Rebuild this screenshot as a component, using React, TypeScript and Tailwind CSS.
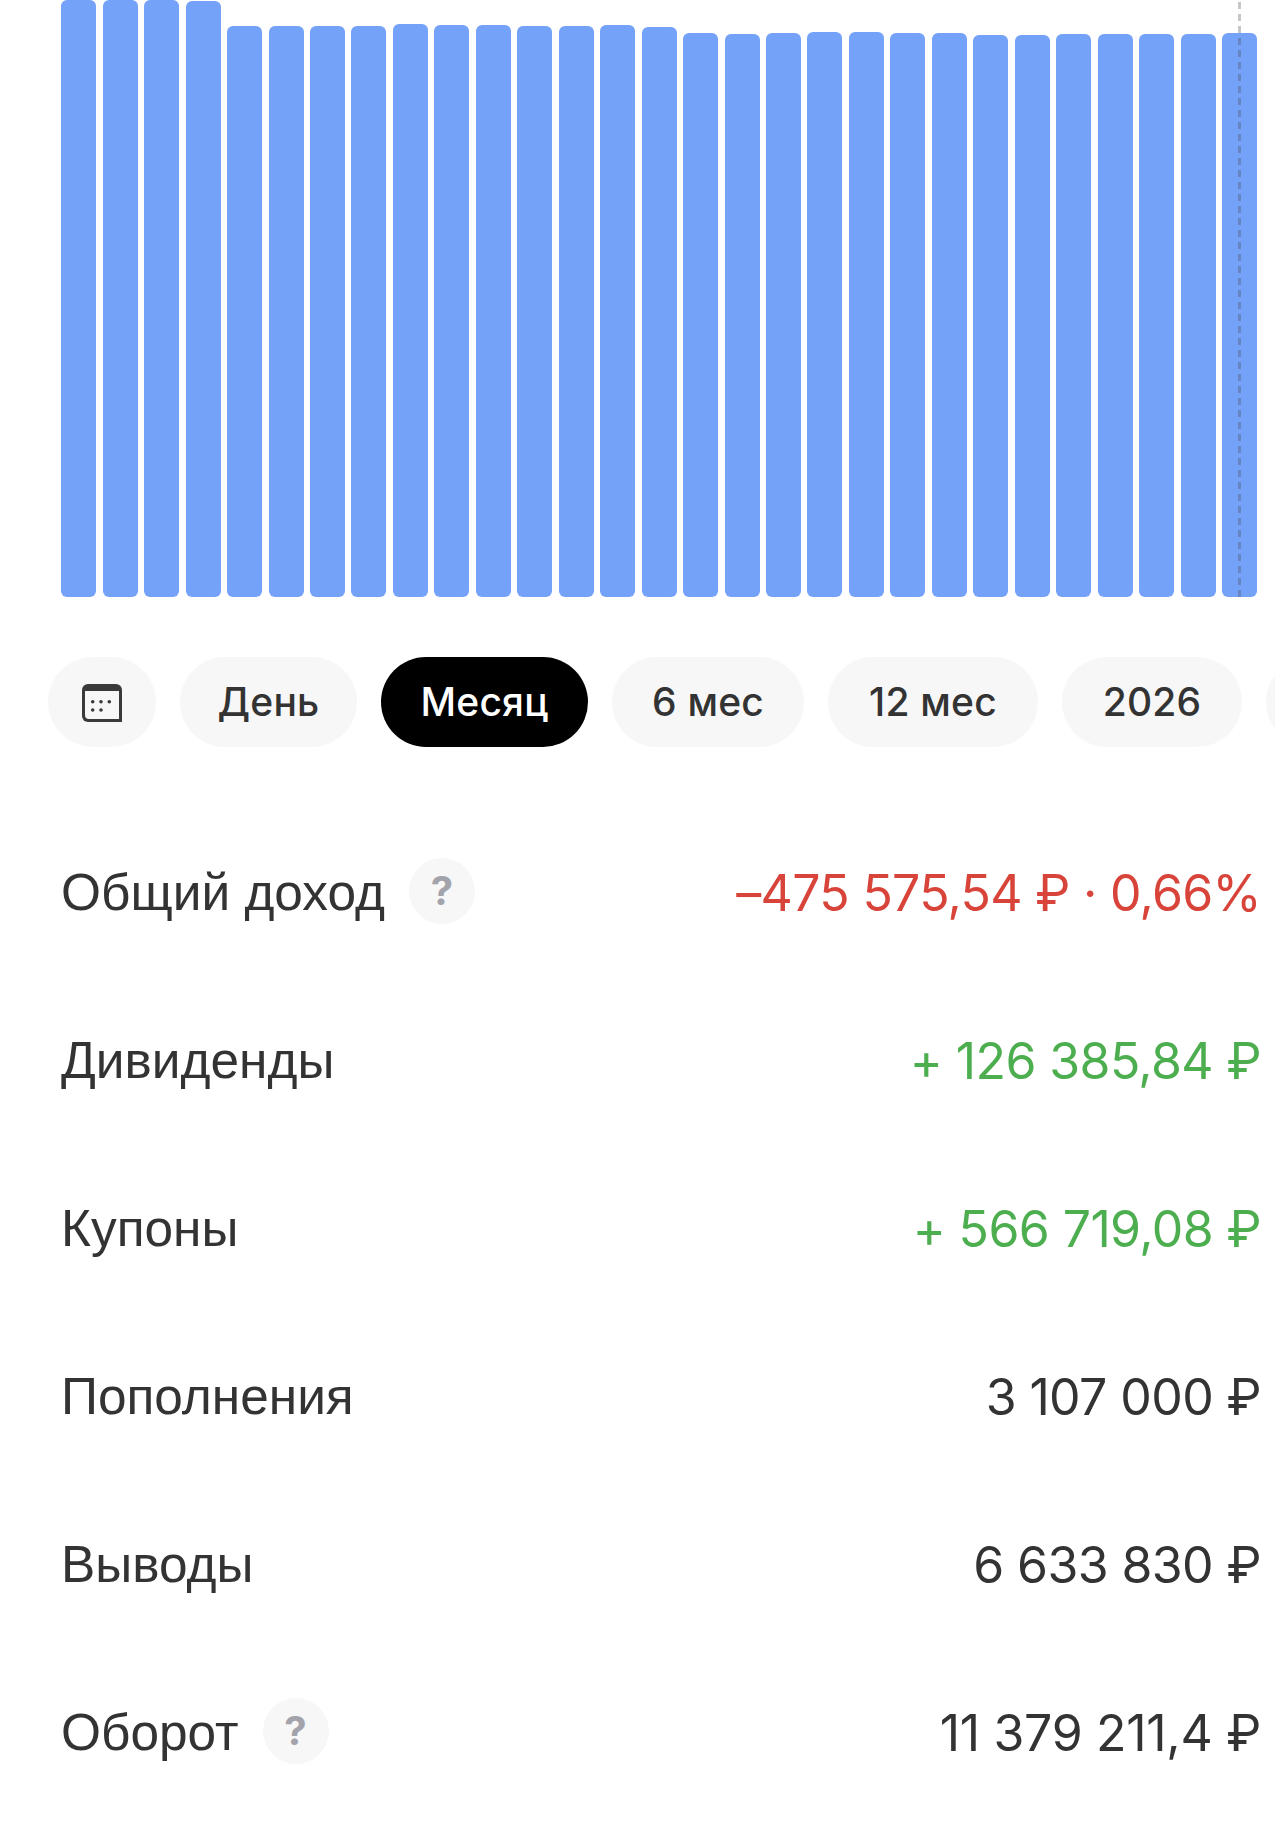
const tops = [0,0,0,1,26,26,26,26,24,25,25,26,26,25,27,33,34,33,32,32,33,33,35,35,34,34,34,34,33];

const rows = [
  { label: "Общий доход", help: true, value: "–475 575,54 ₽ · 0,66%", color: "text-[#d8443a]", track: "tracking-[-0.7px]" },
  { label: "Дивиденды", value: "+ 126 385,84 ₽", color: "text-[#4cae4f]", track: "tracking-[-0.6px]" },
  { label: "Купоны", value: "+ 566 719,08 ₽", color: "text-[#4cae4f]", track: "tracking-[-0.6px]" },
  { label: "Пополнения", value: "3 107 000 ₽", color: "text-[#333333]", track: "tracking-[-0.6px]" },
  { label: "Выводы", value: "6 633 830 ₽", color: "text-[#333333]", track: "tracking-[-0.6px]" },
  { label: "Оборот", help: true, value: "11 379 211,4 ₽", color: "text-[#333333]", track: "tracking-[-0.3px]" },
];

const pills = [
  { t: "День", w: "w-[177px]" },
  { t: "Месяц", w: "w-[207px]", active: true },
  { t: "6 мес", w: "w-[192px]" },
  { t: "12 мес", w: "w-[210px]" },
  { t: "2026", w: "w-[180px]" },
];

function CalendarIcon() {
  return (
    <svg className="mt-[1px]" width="40" height="38" viewBox="0 0 40 38" fill="none">
      <path d="M0 6a6 6 0 0 1 6-6h28a6 6 0 0 1 6 6v32H6a6 6 0 0 1-6-6V6z" fill="#3a3a3c" />
      <path d="M3 7h34v28H7a4 4 0 0 1-4-4V7z" fill="#f7f7f7" />
      <circle cx="10.7" cy="17.7" r="1.8" fill="#3a3a3c" />
      <circle cx="19" cy="17.7" r="1.8" fill="#3a3a3c" />
      <circle cx="27.3" cy="17.7" r="1.8" fill="#3a3a3c" />
      <circle cx="10.7" cy="26" r="1.8" fill="#3a3a3c" />
      <circle cx="19" cy="26" r="1.8" fill="#3a3a3c" />
    </svg>
  );
}

function Help() {
  return (
    <span className="mb-[3px] flex h-[66px] w-[66px] items-center justify-center rounded-full bg-[#f7f7f7] font-['Inter',sans-serif] text-[40px] font-bold text-[#a3a3ab]">
      ?
    </span>
  );
}

export default function App() {
  return (
    <div className="h-[1844px] w-[1275px] overflow-hidden bg-white">
      <div className="relative flex h-[597px] gap-[6.45px] pl-[61.3px] pr-[18px]">
        {tops.map((t, i) => (
          <div key={i} className="flex-1" style={{ paddingTop: t }}>
            <div className="h-full rounded-[6px] bg-[#74a2f9]" />
          </div>
        ))}
        <svg className="absolute left-[1238px] top-0" width="3" height="597">
          <line x1="1.5" y1="2" x2="1.5" y2="597" stroke="#464646" strokeOpacity="0.3" strokeWidth="3" strokeDasharray="7 5" />
        </svg>
      </div>

      <div className="mt-[60px] flex gap-[24px] pl-[48px]">
        <div className="flex h-[90px] w-[108px] shrink-0 items-center justify-center rounded-full bg-[#f7f7f7]">
          <CalendarIcon />
        </div>
        {pills.map((p) => (
          <div
            key={p.t}
            className={`flex h-[90px] shrink-0 items-center justify-center rounded-full font-['Inter',sans-serif] text-[39px] tracking-[0.2px] font-[550] ${p.w} ${
              p.active ? "bg-black text-white" : "bg-[#f7f7f7] text-[#333333]"
            }`}
          >
            {p.t}
          </div>
        ))}
        <div className="h-[90px] w-[108px] shrink-0 rounded-full bg-[#f7f7f7]" />
      </div>

      <div className="mt-[62px] flex flex-col pl-[61px] pr-[14px]">
        {rows.map((r) => (
          <div key={r.label} className="flex h-[168px] items-center justify-between">
            <div className="flex items-center gap-[24px] font-['Liberation_Sans',sans-serif] text-[51.4px] text-[#333333]">
              <span>{r.label}</span>
              {r.help && <Help />}
            </div>
            <span className={`font-['Inter',sans-serif] text-[50px] ${r.track} ${r.color}`}>{r.value}</span>
          </div>
        ))}
      </div>
    </div>
  );
}
